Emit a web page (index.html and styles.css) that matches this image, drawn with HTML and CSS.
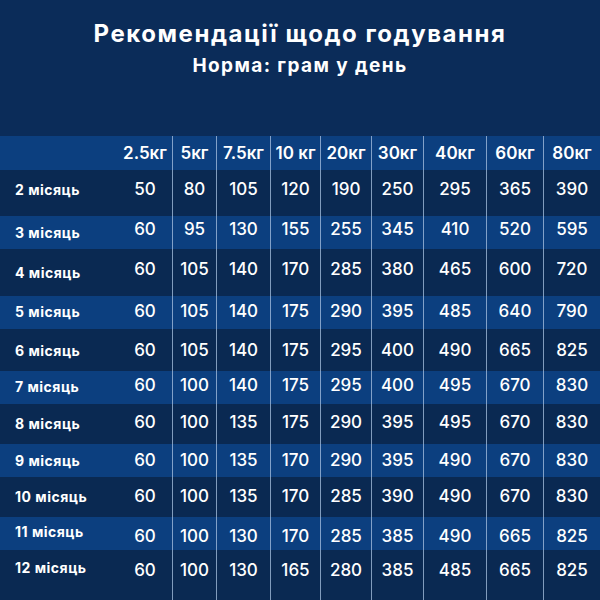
FILE: index.html
```html
<!DOCTYPE html>
<html lang="uk">
<head>
<meta charset="utf-8">
<title>Рекомендації щодо годування</title>
<link rel="stylesheet" href="styles.css">
</head>
<body>
<div class="page">
  <header class="titles">
    <h1 class="title">Рекомендації щодо годування</h1>
    <h2 class="subtitle">Норма: грам у день</h2>
  </header>
  <div class="table">
    <div class="row light rh">
      <div class="lab"></div><div class="c">2.5кг</div><div class="c d">5кг</div><div class="c d">7.5кг</div><div class="c d">10 кг</div><div class="c d">20кг</div><div class="c d">30кг</div><div class="c d">40кг</div><div class="c d">60кг</div><div class="c d">80кг</div>
    </div>
    <div class="row dark r2">
      <div class="lab">2 місяць</div><div class="c">50</div><div class="c d">80</div><div class="c d">105</div><div class="c d">120</div><div class="c d">190</div><div class="c d">250</div><div class="c d">295</div><div class="c d">365</div><div class="c d">390</div>
    </div>
    <div class="row light r3">
      <div class="lab">3 місяць</div><div class="c">60</div><div class="c d">95</div><div class="c d">130</div><div class="c d">155</div><div class="c d">255</div><div class="c d">345</div><div class="c d">410</div><div class="c d">520</div><div class="c d">595</div>
    </div>
    <div class="row dark r4">
      <div class="lab">4 місяць</div><div class="c">60</div><div class="c d">105</div><div class="c d">140</div><div class="c d">170</div><div class="c d">285</div><div class="c d">380</div><div class="c d">465</div><div class="c d">600</div><div class="c d">720</div>
    </div>
    <div class="row light r5">
      <div class="lab">5 місяць</div><div class="c">60</div><div class="c d">105</div><div class="c d">140</div><div class="c d">175</div><div class="c d">290</div><div class="c d">395</div><div class="c d">485</div><div class="c d">640</div><div class="c d">790</div>
    </div>
    <div class="row dark r6">
      <div class="lab">6 місяць</div><div class="c">60</div><div class="c d">105</div><div class="c d">140</div><div class="c d">175</div><div class="c d">295</div><div class="c d">400</div><div class="c d">490</div><div class="c d">665</div><div class="c d">825</div>
    </div>
    <div class="row light r7">
      <div class="lab">7 місяць</div><div class="c">60</div><div class="c d">100</div><div class="c d">140</div><div class="c d">175</div><div class="c d">295</div><div class="c d">400</div><div class="c d">495</div><div class="c d">670</div><div class="c d">830</div>
    </div>
    <div class="row dark r8">
      <div class="lab">8 місяць</div><div class="c">60</div><div class="c d">100</div><div class="c d">135</div><div class="c d">175</div><div class="c d">290</div><div class="c d">395</div><div class="c d">495</div><div class="c d">670</div><div class="c d">830</div>
    </div>
    <div class="row light r9">
      <div class="lab">9 місяць</div><div class="c">60</div><div class="c d">100</div><div class="c d">135</div><div class="c d">170</div><div class="c d">290</div><div class="c d">395</div><div class="c d">490</div><div class="c d">670</div><div class="c d">830</div>
    </div>
    <div class="row dark r10">
      <div class="lab">10 місяць</div><div class="c">60</div><div class="c d">100</div><div class="c d">135</div><div class="c d">170</div><div class="c d">285</div><div class="c d">390</div><div class="c d">490</div><div class="c d">670</div><div class="c d">830</div>
    </div>
    <div class="row light r11">
      <div class="lab">11 місяць</div><div class="c">60</div><div class="c d">100</div><div class="c d">130</div><div class="c d">170</div><div class="c d">285</div><div class="c d">385</div><div class="c d">490</div><div class="c d">665</div><div class="c d">825</div>
    </div>
    <div class="row dark r12">
      <div class="lab">12 місяць</div><div class="c">60</div><div class="c d">100</div><div class="c d">130</div><div class="c d">165</div><div class="c d">280</div><div class="c d">385</div><div class="c d">485</div><div class="c d">665</div><div class="c d">825</div>
    </div>
  </div>
</div>
</body>
</html>
```
FILE: styles.css
```css
html, body {
  margin: 0;
  padding: 0;
  background: #0b2c59;
}
body {
  font-family: "Inter", "Open Sans", sans-serif;
  color: #ffffff;
}
.page {
  width: 600px;
  height: 600px;
  overflow: hidden;
  display: flex;
  flex-direction: column;
  background: #0b2c59;
}
.titles {
  height: 136px;
  display: flex;
  flex-direction: column;
  align-items: center;
}
.title {
  margin: 19px 0 0 0;
  font-size: 24px;
  line-height: 30px;
  font-weight: 700;
  letter-spacing: 1.55px;
}
.subtitle {
  margin: 5px 0 0 0;
  font-size: 19px;
  line-height: 24px;
  font-weight: 700;
  letter-spacing: 1.4px;
}
.table {
  display: flex;
  flex-direction: column;
}
.row {
  display: grid;
  grid-template-columns: 118px 54px 44px 54px 50px 51px 52px 63px 57px 57px;
  box-sizing: border-box;
}
.light { background: #0c3f7f; }
.dark { background: #0a2952; }
.c {
  text-align: center;
  font-size: 17px;
  line-height: 20px;
  font-weight: 500;
  white-space: nowrap;
}
.d { border-left: 1px solid rgba(170, 195, 225, 0.75); }
.lab {
  padding-left: 15px;
  font-size: 14px;
  line-height: 20px;
  font-weight: 700;
  letter-spacing: 0.5px;
  white-space: nowrap;
}
.rh { height: 34px; }
.rh .c { padding-top: 7px; font-weight: 600; }
.r2 { height: 46px; }  .r2 .c { padding-top: 9px; }  .r2 .lab { padding-top: 10px; }
.r3 { height: 33px; }  .r3 .c { padding-top: 3px; }  .r3 .lab { padding-top: 7px; }
.r4 { height: 47px; }  .r4 .c { padding-top: 10px; } .r4 .lab { padding-top: 14px; }
.r5 { height: 33px; }  .r5 .c { padding-top: 5px; }  .r5 .lab { padding-top: 6px; }
.r6 { height: 42px; }  .r6 .c { padding-top: 11px; } .r6 .lab { padding-top: 12px; }
.r7 { height: 33px; }  .r7 .c { padding-top: 4px; }  .r7 .lab { padding-top: 6px; }
.r8 { height: 40px; }  .r8 .c { padding-top: 8px; }  .r8 .lab { padding-top: 10px; }
.r9 { height: 33px; }  .r9 .c { padding-top: 6px; }  .r9 .lab { padding-top: 7px; }
.r10 { height: 40px; } .r10 .c { padding-top: 9px; } .r10 .lab { padding-top: 10px; }
.r11 { height: 33px; } .r11 .c { padding-top: 9px; } .r11 .lab { padding-top: 5px; }
.r12 { height: 50px; } .r12 .c { padding-top: 10px; } .r12 .lab { padding-top: 8px; }
```
